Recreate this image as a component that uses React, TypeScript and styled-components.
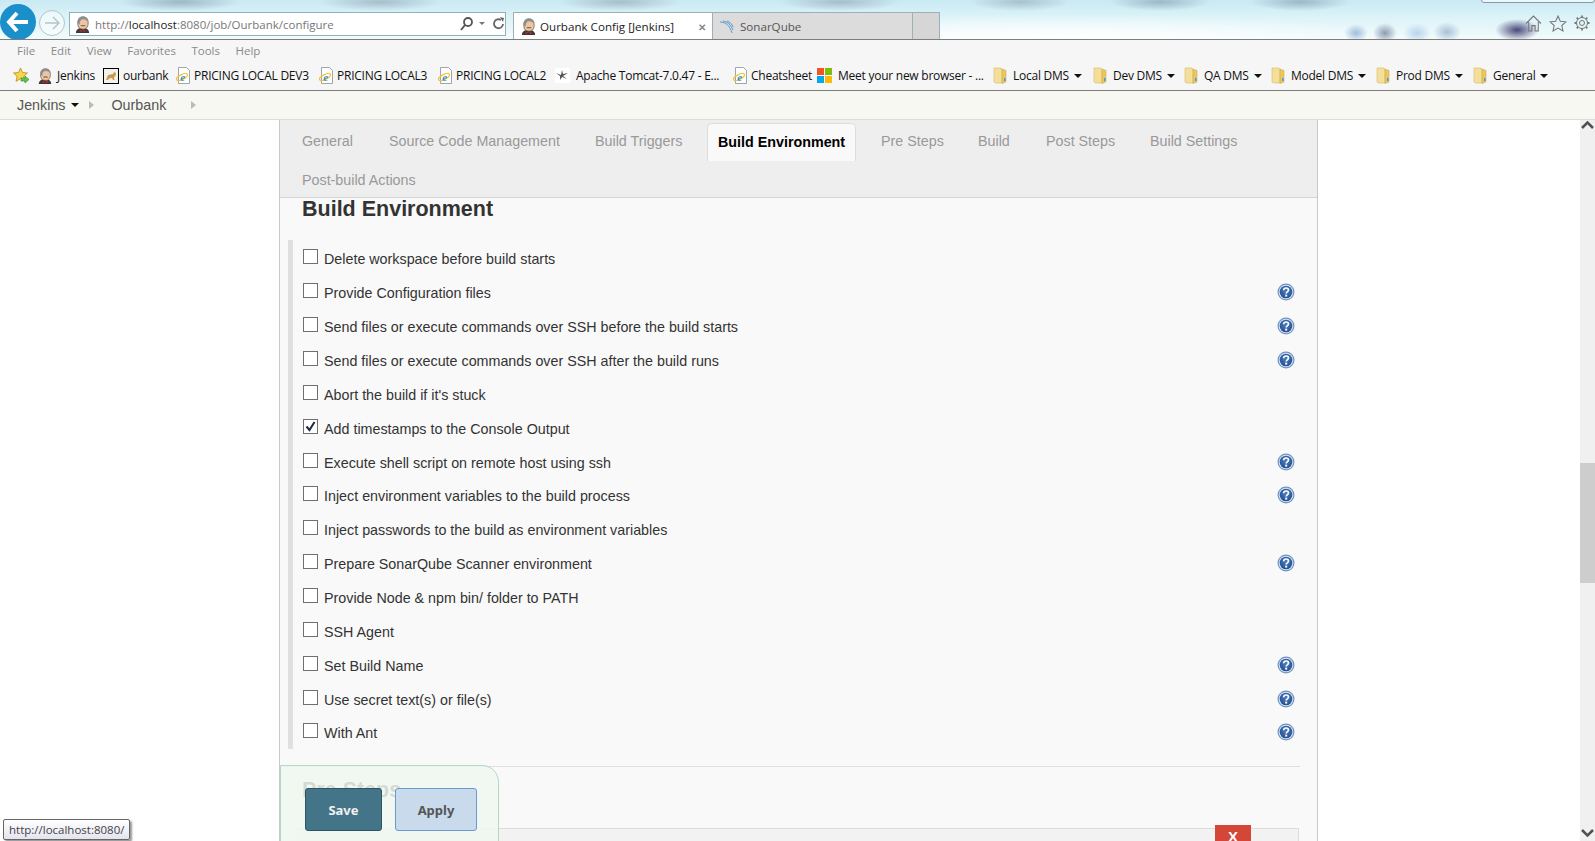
import { ReactNode } from 'react'
import styled, { createGlobalStyle } from 'styled-components'

const GlobalStyle = createGlobalStyle`
  html, body {
    margin: 0;
    padding: 0;
    height: 100%;
    overflow: hidden;
    background: #fff;
    font-family: 'Liberation Sans', Arial, sans-serif;
  }
  * { box-sizing: border-box; }
`

function JenkinsHead({ size = 18 }: { size?: number }) {
  return (
    <svg width={size} height={size} viewBox="0 0 18 18">
      <path d="M2 18c0-3 2-4.500 4-5h6c2 .5 4 2 4 5z" fill="#3a3a3a" />
      <path d="M4 8c0-5 2-7 5.500-7S15 3 15 7.500 13 14 9.500 14 4 12 4 8z" fill="#eec5a0" stroke="#5a4a40" strokeWidth=".7" />
      <path d="M4 8C3 3 6 .5 9.500.5 13 .5 15.500 3 15 6c-2-2-4-3-6-2.500C7 4 6 6 6 9z" fill="#8b8f92" />
      <path d="M6.500 10c1.500-.8 4-.8 6 0-1 1-1 1-3 .8-1 .2-2 0-3-.8z" fill="#70645a" />
      <path d="M6 14.500l3 1 3-1v2.500l-3-1-3 1z" fill="#c8262c" />
    </svg>
  )
}

function IeIcon() {
  return (
    <svg width="16" height="17" viewBox="0 0 16 17">
      <path d="M3.500 .5h8l3 3v13h-11z" fill="#fff" stroke="#8a8f96" strokeWidth=".8" />
      <ellipse cx="7" cy="10" rx="6" ry="2.400" fill="none" stroke="#f2c230" strokeWidth="1.200" transform="rotate(-28 7 10)" />
      <text x="7.500" y="13.500" fontFamily="Liberation Serif, serif" fontWeight="700" fontStyle="italic" fontSize="11" fill="#2a8fd8" textAnchor="middle">e</text>
    </svg>
  )
}

function FolderIcon() {
  return (
    <svg width="14" height="17" viewBox="0 0 14 17">
      <path d="M1 1h7l1 1v14H3l-2-1z" fill="#f4df9a" stroke="#d8bb62" strokeWidth=".6" />
      <path d="M9 2l4 1.500V15l-4 1.500z" fill="#ecc65e" stroke="#c9a545" strokeWidth=".5" />
      <rect x="11" y="11" width="1.500" height="3" fill="#3c9fdc" />
    </svg>
  )
}

function WindowsIcon() {
  return (
    <svg width="15" height="15" viewBox="0 0 15 15">
      <rect width="7" height="7" fill="#f35325" />
      <rect x="8" width="7" height="7" fill="#81bc06" />
      <rect y="8" width="7" height="7" fill="#05a6f0" />
      <rect x="8" y="8" width="7" height="7" fill="#ffba08" />
    </svg>
  )
}

function TomcatIcon() {
  return (
    <svg width="15" height="15" viewBox="0 0 15 15">
      <rect width="15" height="15" fill="#fff" />
      <path d="M1 5l5 2 1-5 1 4 5-1-5 3 4 3-5-2-2 3 0-4z" fill="#555" />
    </svg>
  )
}

function CatIcon() {
  return (
    <svg width="16" height="16" viewBox="0 0 16 16">
      <rect x=".5" y=".5" width="15" height="15" fill="#f4f1ea" stroke="#000" />
      <path d="M3 12l2-5 5-1 1-2 2 1-.5 3-1.500 1 .5 3h-1.500L9 10l-3 .5-1 1.500z" fill="#c89a4e" />
    </svg>
  )
}

function FavStar() {
  return (
    <svg width="17" height="17" viewBox="0 0 17 17">
      <path d="M7.500 1l2 4.500 5 .5-3.700 3.300 1.100 5-4.400-2.600L3 14.300l1.100-5L.5 6l5-.5z" fill="#f7d44c" stroke="#b98c1c" strokeWidth=".8" />
      <path d="M8 11h4V9l4 3.500-4 3.500v-2H8z" fill="#5ec44a" stroke="#2f8f2a" strokeWidth=".6" />
    </svg>
  )
}

function HelpIcon() {
  return (
    <svg width="18" height="18" viewBox="0 0 18 18">
      <defs>
        <radialGradient id="helpFill" cx="50%" cy="40%" r="60%">
          <stop offset="0%" stopColor="#4f7fc0" />
          <stop offset="100%" stopColor="#234f92" />
        </radialGradient>
      </defs>
      <circle cx="9" cy="9" r="8.500" fill="#6f94c4" />
      <circle cx="9" cy="9" r="7.300" fill="#d8e4f0" />
      <circle cx="9" cy="9" r="6.300" fill="url(#helpFill)" />
      <path d="M6.600 7.200C6.700 5.700 7.800 5 9.100 5c1.400 0 2.400.8 2.400 2 0 1.900-2.300 1.800-2.300 3.600" fill="none" stroke="#fff" strokeWidth="1.700" />
      <rect x="8.200" y="11.600" width="2" height="2" fill="#fff" />
    </svg>
  )
}

interface OptionRow {
  label: string
  help: boolean
  checked?: boolean
}

const rows: OptionRow[] = [
  { label: 'Delete workspace before build starts', help: false },
  { label: 'Provide Configuration files', help: true },
  { label: 'Send files or execute commands over SSH before the build starts', help: true },
  { label: 'Send files or execute commands over SSH after the build runs', help: true },
  { label: "Abort the build if it's stuck", help: false },
  { label: 'Add timestamps to the Console Output', help: false, checked: true },
  { label: 'Execute shell script on remote host using ssh', help: true },
  { label: 'Inject environment variables to the build process', help: true },
  { label: 'Inject passwords to the build as environment variables', help: false },
  { label: 'Prepare SonarQube Scanner environment', help: true },
  { label: 'Provide Node & npm bin/ folder to PATH', help: false },
  { label: 'SSH Agent', help: false },
  { label: 'Set Build Name', help: true },
  { label: 'Use secret text(s) or file(s)', help: true },
  { label: 'With Ant', help: true },
]

interface Favorite {
  icon: ReactNode
  label: string
  w: number
  gap: number
  menu?: boolean
}

const favorites: Favorite[] = [
  { icon: <JenkinsHead size={16} />, label: 'Jenkins', w: 66, gap: 4 },
  { icon: <CatIcon />, label: 'ourbank', w: 72, gap: 4 },
  { icon: <IeIcon />, label: 'PRICING LOCAL DEV3', w: 143, gap: 3 },
  { icon: <IeIcon />, label: 'PRICING LOCAL3', w: 119, gap: 3 },
  { icon: <IeIcon />, label: 'PRICING LOCAL2', w: 118, gap: 3 },
  { icon: <TomcatIcon />, label: 'Apache Tomcat-7.0.47 - E...', w: 177, gap: 6 },
  { icon: <IeIcon />, label: 'Cheatsheet', w: 85, gap: 3 },
  { icon: <WindowsIcon />, label: 'Meet your new browser - ...', w: 176, gap: 6 },
  { icon: <FolderIcon />, label: 'Local DMS', menu: true, w: 100, gap: 6 },
  { icon: <FolderIcon />, label: 'Dev DMS', menu: true, w: 91, gap: 6 },
  { icon: <FolderIcon />, label: 'QA DMS', menu: true, w: 87, gap: 6 },
  { icon: <FolderIcon />, label: 'Model DMS', menu: true, w: 105, gap: 6 },
  { icon: <FolderIcon />, label: 'Prod DMS', menu: true, w: 97, gap: 6 },
  { icon: <FolderIcon />, label: 'General', menu: true, w: 80, gap: 6 },
]

const tabs = [
  { label: 'General', w: 87 },
  { label: 'Source Code Management', w: 206 },
  { label: 'Build Triggers', w: 123 },
  { label: 'Build Environment', w: 163, active: true },
  { label: 'Pre Steps', w: 97 },
  { label: 'Build', w: 68 },
  { label: 'Post Steps', w: 104 },
  { label: 'Build Settings', w: 120 },
  { label: 'Post-build Actions', w: 200 },
]

function App() {
  return (
    <Page>
      <GlobalStyle />
      <TitleBar>
        <BackButton>
          <svg width="24" height="22" viewBox="0 0 24 22">
            <path d="M11 2L3 11l8 9M3 11h19" fill="none" stroke="#fff" strokeWidth="4" />
          </svg>
        </BackButton>
        <ForwardButton>
          <svg width="16" height="14" viewBox="0 0 16 14">
            <path d="M9 1l6 6-6 6M15 7H1" fill="none" stroke="#b8c4c8" strokeWidth="1.500" />
          </svg>
        </ForwardButton>
        <AddressBar>
          <JenkinsHead size={17} />
          <Url>
            http://<b>localhost</b>:8080/job/Ourbank/configure
          </Url>
          <svg width="48" height="16" viewBox="-2 0 48 16">
            <circle cx="9" cy="6" r="4" fill="none" stroke="#555" strokeWidth="1.800" />
            <path d="M6 9l-4 5" stroke="#555" strokeWidth="2" />
            <path d="M20 6h6l-3 3z" fill="#777" />
            <path d="M42 4a4.500 4.500 0 1 0 2 4" fill="none" stroke="#666" strokeWidth="1.800" />
            <path d="M41 1l4 1-1 4z" fill="#666" />
          </svg>
        </AddressBar>
        <TabStrip>
          <BrowserTab $active>
            <JenkinsHead size={17} />
            <span>Ourbank Config [Jenkins]</span>
            <TabClose>✕</TabClose>
          </BrowserTab>
          <BrowserTab>
            <svg width="18" height="14" viewBox="0 0 18 14">
              <path d="M1 2c6 0 10 4 12 11M4 1c5 1 8 4 10 9M8 1c3 1 5 3 6 6" fill="none" stroke="#5b9bd0" strokeWidth="1" />
            </svg>
            <span>SonarQube</span>
          </BrowserTab>
          <NewTab />
        </TabStrip>
        <WindowButtons />
        <ToolIcons>
          <svg width="17" height="17" viewBox="0 0 16 16">
            <path d="M1 8l7-7 7 7M3.500 6.500V15H6.500V10h3v5h3V6.500" fill="none" stroke="#777" />
          </svg>
          <svg width="18" height="17" viewBox="0 0 17 16">
            <path d="M8.500 1l2.200 4.800 5.300.6-3.900 3.500 1.100 5.200-4.700-2.700-4.700 2.700 1.100-5.200L1 6.400l5.300-.6z" fill="none" stroke="#777" />
          </svg>
          <svg width="16" height="16" viewBox="0 0 16 16">
            <circle cx="8" cy="8" r="2.500" fill="none" stroke="#777" />
            <circle cx="8" cy="8" r="5.500" fill="none" stroke="#777" strokeWidth="1" />
            <path d="M8 .5v2M8 13.500v2M.5 8h2M13.500 8h2M2.700 2.700l1.400 1.400M11.900 11.900l1.400 1.400M2.700 13.300l1.400-1.400M11.900 4.100l1.400-1.400" stroke="#777" strokeWidth="1.800" />
          </svg>
        </ToolIcons>
      </TitleBar>

      <MenuBar>
        {['File', 'Edit', 'View', 'Favorites', 'Tools', 'Help'].map(m => (
          <span key={m}>{m}</span>
        ))}
      </MenuBar>

      <FavBar>
        <FavStarWrap>
          <FavStar />
        </FavStarWrap>
        {favorites.map(f => (
          <FavItem key={f.label} $w={f.w} $gap={f.gap}>
            {f.icon}
            <span>{f.label}</span>
            {f.menu && <Caret />}
          </FavItem>
        ))}
      </FavBar>

      <Breadcrumb>
        <span>Jenkins</span>
        <CrumbCaret />
        <Chevron />
        <CrumbLink>Ourbank</CrumbLink>
        <Chevron />
      </Breadcrumb>

      <Body>
        <Gutter />
        <Panel>
          <TabBar>
            {tabs.map(t => (
              <ConfigTab key={t.label} $w={t.w} $active={t.active}>
                {t.label}
              </ConfigTab>
            ))}
          </TabBar>
          <SectionTitle>Build Environment</SectionTitle>
          <OptionList>
            {rows.map(r => (
              <Option key={r.label}>
                <CheckBox>
                  {r.checked && (
                    <svg width="13" height="13" viewBox="0 0 13 13">
                      <path d="M2.500 6.500l3 3.500 5-8" fill="none" stroke="#1b2a44" strokeWidth="2" />
                    </svg>
                  )}
                </CheckBox>
                <OptionLabel>{r.label}</OptionLabel>
                {r.help && <HelpIcon />}
              </Option>
            ))}
          </OptionList>
          <Divider />
          <NextTitle>Pre Steps</NextTitle>
          <StepBox>
            <RemoveButton>X</RemoveButton>
          </StepBox>
          <SaveBar>
            <SaveButton>Save</SaveButton>
            <ApplyButton>Apply</ApplyButton>
          </SaveBar>
        </Panel>
        <RightSpace />
        <ScrollBar>
          <svg width="15" height="10" viewBox="0 0 15 10">
            <path d="M2 8l5.500-5.500L13 8" fill="none" stroke="#505050" strokeWidth="2.500" />
          </svg>
          <ScrollThumb />
          <svg width="15" height="10" viewBox="0 0 15 10">
            <path d="M2 2l5.500 5.500L13 2" fill="none" stroke="#505050" strokeWidth="2.500" />
          </svg>
        </ScrollBar>
      </Body>

      <StatusTip>http://localhost:8080/</StatusTip>
    </Page>
  )
}

const Page = styled.div`
  position: relative;
  width: 1595px;
  height: 841px;
  overflow: hidden;
  display: flex;
  flex-direction: column;
`

const TitleBar = styled.div`
  position: relative;
  height: 40px;
  flex: none;
  display: flex;
  align-items: flex-start;
  border-bottom: 1px solid #7d7d7d;
  overflow: hidden;
  background:
    radial-gradient(ellipse 22px 11px at 1517px 30px, #4a4878 0, rgba(74, 72, 120, 0) 100%),
    radial-gradient(ellipse 12px 9px at 1356px 33px, #9fbddb 0, rgba(159, 189, 219, 0) 100%),
    radial-gradient(ellipse 12px 10px at 1385px 33px, #8c9cb0 0, rgba(140, 156, 176, 0) 100%),
    radial-gradient(ellipse 14px 10px at 1417px 33px, #b8d4ec 0, rgba(184, 212, 236, 0) 100%),
    radial-gradient(ellipse 14px 10px at 1447px 32px, #a8c0d6 0, rgba(168, 192, 214, 0) 100%),
    radial-gradient(ellipse 60px 9px at 180px 2px, #9db8c4 0, rgba(157, 184, 196, 0) 100%),
    radial-gradient(ellipse 60px 9px at 380px 2px, #a6bfca 0, rgba(166, 191, 202, 0) 100%),
    radial-gradient(ellipse 60px 9px at 620px 2px, #a6bfca 0, rgba(166, 191, 202, 0) 100%),
    radial-gradient(ellipse 60px 9px at 840px 2px, #a3bfcc 0, rgba(163, 191, 204, 0) 100%),
    radial-gradient(ellipse 50px 9px at 1020px 2px, #a8c2ce 0, rgba(168, 194, 206, 0) 100%),
    radial-gradient(ellipse 50px 9px at 1160px 2px, #9bb8c8 0, rgba(155, 184, 200, 0) 100%),
    radial-gradient(ellipse 50px 9px at 1300px 2px, #9bb8c8 0, rgba(155, 184, 200, 0) 100%),
    radial-gradient(ellipse 360px 24px at 1060px 38px, #ffffff 0, rgba(255, 255, 255, 0) 100%),
    linear-gradient(to bottom, #c9e9f3 0, #dcf3f8 45%, #f2fbfc 100%);
`

const BackButton = styled.div`
  width: 36px;
  height: 36px;
  margin-top: 4px;
  flex: none;
  border-radius: 50%;
  background: #1a8fc9;
  display: flex;
  align-items: center;
  justify-content: center;
`

const ForwardButton = styled.div`
  width: 26px;
  height: 26px;
  margin: 10px 0 0 3px;
  flex: none;
  border-radius: 50%;
  border: 1px solid #b4c4ca;
  background: rgba(255, 255, 255, 0.5);
  display: flex;
  align-items: center;
  justify-content: center;
`

const AddressBar = styled.div`
  width: 437px;
  height: 24px;
  margin: 12px 0 0 4px;
  flex: none;
  display: flex;
  align-items: center;
  gap: 4px;
  padding: 0 0 0 4px;
  background: #fff;
  border: 1px solid #8fb0bc;
`

const Url = styled.div`
  flex: 1;
  font-family: 'Open Sans', 'Noto Sans', sans-serif;
  font-size: 11.500px;
  color: #777;
  white-space: nowrap;

  b {
    font-weight: 400;
    color: #222;
  }
`

const TabStrip = styled.div`
  display: flex;
  margin: 12px 0 0 7px;
  height: 28px;
`

const BrowserTab = styled.div<{ $active?: boolean }>`
  width: 200px;
  display: flex;
  align-items: center;
  gap: 3px;
  padding: 0 6px;
  font-family: 'Open Sans', 'Noto Sans', sans-serif;
  font-size: 11.600px;
  white-space: nowrap;
  color: ${({ $active }) => ($active ? '#222' : '#555')};
  background: ${({ $active }) => ($active ? '#fff' : '#dcdcdc')};
  border: 1px solid #9fb0b5;
  border-bottom: none;
  border-left-width: ${({ $active }) => ($active ? '1px' : '0')};
`

const TabClose = styled.span`
  margin-left: auto;
  font-size: 10px;
  font-weight: 700;
  color: #888;
`

const NewTab = styled.div`
  width: 27px;
  background: #d6d6d6;
  border: 1px solid #9fb0b5;
  border-bottom: none;
  border-left: none;
`

const WindowButtons = styled.div`
  position: absolute;
  top: -6px;
  right: 0;
  width: 114px;
  height: 9px;
  background: rgba(255, 255, 255, 0.6);
  border: 1px solid #8a9aa2;
  border-radius: 3px;
`

const ToolIcons = styled.div`
  position: absolute;
  top: 15px;
  right: 5px;
  display: flex;
  gap: 7px;
`

const MenuBar = styled.div`
  height: 21px;
  flex: none;
  display: flex;
  align-items: center;
  gap: 15.500px;
  padding: 0 0 0 17px;
  font-family: 'Open Sans', 'Noto Sans', sans-serif;
  font-size: 11.500px;
  color: #8a8a8a;
  background: #f6f6f6;
`

const FavBar = styled.div`
  height: 30px;
  flex: none;
  display: flex;
  align-items: center;
  padding-left: 13px;
  font-family: 'Open Sans', 'Noto Sans', sans-serif;
  font-size: 12px;
  letter-spacing: -0.25px;
  color: #111;
  background: #f6f6f6;
  border-bottom: 1px solid #7d7d7d;
`

const FavStarWrap = styled.div`
  width: 24px;
  display: flex;
`

const FavItem = styled.div<{ $w: number; $gap: number }>`
  width: ${({ $w }) => $w}px;
  flex: none;
  display: flex;
  align-items: center;
  gap: ${({ $gap }) => $gap}px;
  white-space: nowrap;
`

const Caret = styled.i`
  width: 0;
  height: 0;
  margin-left: -1px;
  border-left: 4px solid transparent;
  border-right: 4px solid transparent;
  border-top: 4px solid #111;
`

const Breadcrumb = styled.div`
  height: 29px;
  flex: none;
  display: flex;
  align-items: center;
  padding-left: 17px;
  font-size: 14.300px;
  color: #555;
  background: #f6f8f1;
  border-bottom: 1px solid #dcdcdc;
`

const CrumbCaret = styled(Caret)`
  margin-left: 6px;
`

const Chevron = styled.i`
  width: 0;
  height: 0;
  margin: 0 0 0 10px;
  border-top: 4px solid transparent;
  border-bottom: 4px solid transparent;
  border-left: 5px solid #bbb;
`

const CrumbLink = styled.span`
  margin-left: 17px;
  margin-right: 15px;
`

const Body = styled.div`
  flex: 1;
  min-height: 0;
  display: flex;
  background: #fff;
`

const Gutter = styled.div`
  width: 279px;
  flex: none;
`

const Panel = styled.div`
  position: relative;
  width: 1039px;
  flex: none;
  overflow: hidden;
  background: #f9f9f9;
  border-left: 1px solid #c8c8c8;
  border-right: 1px solid #c8c8c8;
`

const TabBar = styled.div`
  display: flex;
  flex-wrap: wrap;
  padding: 3px 0 0 11px;
  height: 78px;
  background: #eeeeee;
  border-bottom: 1px solid #d5d5d5;
`

const ConfigTab = styled.div<{ $active?: boolean; $w: number }>`
  width: ${({ $w }) => $w}px;
  height: 38.500px;
  padding: 0 11px;
  line-height: 37px;
  font-size: 14.300px;
  white-space: nowrap;
  color: ${({ $active }) => ($active ? '#000' : '#999')};
  font-weight: ${({ $active }) => ($active ? 700 : 400)};
  background: ${({ $active }) => ($active ? '#f9f9f9' : 'transparent')};
  background-clip: content-box;
  border-radius: 5px 5px 0 0;
  ${({ $active }) =>
    $active &&
    `
    width: 149px;
    margin-right: 14px;
    height: 37.500px;
    margin-bottom: 1px;
    background-clip: border-box;
    border: 1px solid #ddd;
    border-bottom: none;
    padding: 0 10px;
  `}
`

const SectionTitle = styled.h2`
  margin: 0;
  padding-left: 22px;
  font-size: 21.500px;
  line-height: 22px;
  font-weight: 700;
  color: #333;
`

const OptionList = styled.div`
  margin: 20px 15px 0 8px;
  padding: 1.500px 0 0 10px;
  border-left: 5px solid #e0e0e0;
`

const Option = styled.div`
  height: 33.860px;
  display: flex;
  align-items: center;
  padding-right: 7px;
`

const CheckBox = styled.span`
  width: 15px;
  height: 15px;
  margin-bottom: 3px;
  flex: none;
  background: #fff;
  border: 1px solid #6f6f6f;
  display: flex;
  align-items: center;
  justify-content: center;
`

const OptionLabel = styled.span`
  flex: 1;
  margin: 2px 0 0 6px;
  font-size: 14.300px;
  color: #333;
`

const Divider = styled.div`
  height: 1px;
  margin: 16.500px 17px 0 0;
  background: #dfdfdf;
`

const NextTitle = styled.h2`
  margin: 11px 0 0;
  padding-left: 22px;
  font-size: 21.500px;
  line-height: 24px;
  font-weight: 700;
  color: #333;
`

const StepBox = styled.div`
  position: relative;
  height: 40px;
  margin: 26px 18px 0 17px;
  background: #f2f2f2;
  border: 1px solid #ddd;
`

const RemoveButton = styled.div`
  position: absolute;
  top: -4px;
  right: 47px;
  width: 36px;
  height: 30px;
  padding-top: 3px;
  text-align: center;
  font-size: 15px;
  font-weight: 700;
  color: #fff;
  background: #d44638;
`

const SaveBar = styled.div`
  position: absolute;
  left: 0;
  bottom: -12px;
  width: 219px;
  height: 88px;
  display: flex;
  gap: 13px;
  padding: 22px 0 0 24px;
  background: rgba(240, 248, 240, 0.85);
  border: 1px solid #b5d6c0;
  border-radius: 0 17px 0 0;
`

const SaveButton = styled.button`
  width: 77px;
  height: 43px;
  padding: 0;
  font-family: 'Noto Sans', sans-serif;
  font-size: 13px;
  font-weight: 700;
  color: #f2f2f2;
  background: #447487;
  border: 1px solid #2e5566;
  border-radius: 3px;
`

const ApplyButton = styled.button`
  width: 82px;
  height: 43px;
  padding: 0;
  font-family: 'Noto Sans', sans-serif;
  font-size: 13px;
  font-weight: 700;
  color: #555;
  background: #c9daec;
  border: 1px solid #6a9bd0;
  border-radius: 3px;
`

const RightSpace = styled.div`
  flex: 1;
`

const ScrollBar = styled.div`
  width: 15px;
  flex: none;
  display: flex;
  flex-direction: column;
  justify-content: space-between;
  padding-bottom: 3px;
  background: #f0f0f0;
  position: relative;
`

const ScrollThumb = styled.div`
  position: absolute;
  top: 343px;
  left: 0;
  width: 15px;
  height: 120px;
  background: #cdcdcd;
`

const StatusTip = styled.div`
  position: absolute;
  left: 3px;
  bottom: 1px;
  padding: 2px 5px;
  font-family: 'Open Sans', 'Noto Sans', sans-serif;
  font-size: 11.500px;
  color: #444;
  background: linear-gradient(#ffffff, #e4e4f0);
  border: 1px solid #666;
  border-radius: 2px;
  box-shadow: 2px 2px 2px #999;
`

export default App
